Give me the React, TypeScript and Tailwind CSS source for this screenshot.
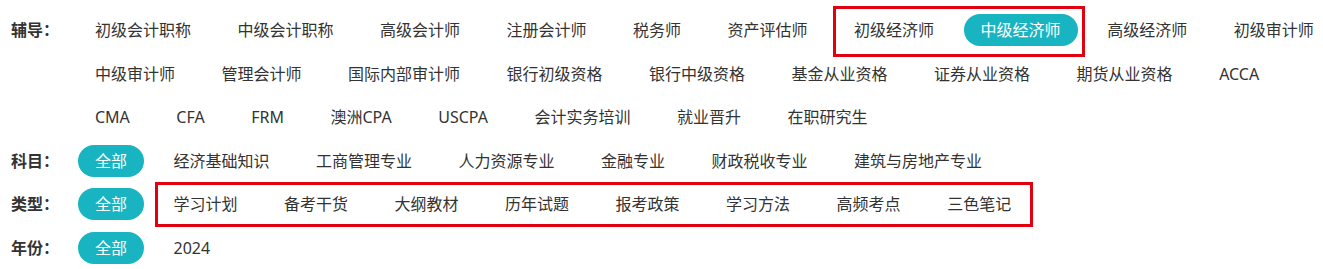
import React from 'react'

type Row = {
    label: string
    items: string[]
    active?: string
}

const rows: Row[] = [
    {
        label: '辅导：',
        active: '中级经济师',
        items: [
            '初级会计职称', '中级会计职称', '高级会计师', '注册会计师', '税务师', '资产评估师',
            '初级经济师', '中级经济师', '高级经济师', '初级审计师',
            '中级审计师', '管理会计师', '国际内部审计师', '银行初级资格', '银行中级资格',
            '基金从业资格', '证券从业资格', '期货从业资格', 'ACCA',
            'CMA', 'CFA', 'FRM', '澳洲CPA', 'USCPA', '会计实务培训', '就业晋升', '在职研究生',
        ],
    },
    {
        label: '科目：',
        active: '全部',
        items: ['全部', '经济基础知识', '工商管理专业', '人力资源专业', '金融专业', '财政税收专业', '建筑与房地产专业'],
    },
    {
        label: '类型：',
        active: '全部',
        items: ['全部', '学习计划', '备考干货', '大纲教材', '历年试题', '报考政策', '学习方法', '高频考点', '三色笔记'],
    },
    {
        label: '年份：',
        active: '全部',
        items: ['全部', '2024'],
    },
]

export default function App() {
    return (
        <div className='relative w-[1323px] h-[269px] overflow-hidden bg-white text-[#333] font-["Noto_Sans","Noto_Sans_CJK_SC",sans-serif]'>
            <div className='flex flex-col gap-y-[11.5px] pt-[14px]'>
                {rows.map((row) => (
                    <div key={row.label} className='flex'>
                        {/* Label */}
                        <div className='w-[78px] shrink-0 pl-[11px] h-[32px] leading-[32px] text-[16px] font-bold text-[#333]'>
                            {row.label}
                        </div>

                        {/* Options */}
                        <div className='w-[1267px] shrink-0 flex flex-wrap gap-x-[12.5px] gap-y-[11.5px]'>
                            {row.items.map((item) => (
                                <span
                                    key={item}
                                    className={
                                        item === row.active
                                            ? 'h-[32px] leading-[32px] px-[17px] rounded-full bg-[#19b4c1] text-white text-[16px] whitespace-nowrap'
                                            : 'h-[32px] leading-[32px] px-[17px] text-[16px] text-[#333] whitespace-nowrap'
                                    }
                                >
                                    {item}
                                </span>
                            ))}
                        </div>
                    </div>
                ))}
            </div>

            {/* Annotation boxes */}
            <div className='absolute left-[833px] top-[6px] w-[252px] h-[51px] border-[3px] border-[#e1000f] pointer-events-none'></div>
            <div className='absolute left-[155px] top-[182px] w-[878px] h-[45px] border-[3px] border-[#e1000f] pointer-events-none'></div>
        </div>
    )
}
